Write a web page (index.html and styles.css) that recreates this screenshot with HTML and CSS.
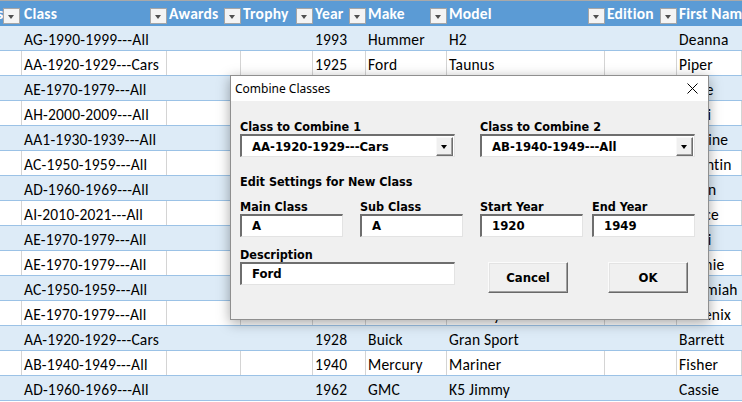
FILE: index.html
```html
<!DOCTYPE html>
<html>
<head>
<meta charset="utf-8">
<link rel="stylesheet" href="styles.css">
</head>
<body>
<div class="sheet">
  <div class="topline"></div>
  <div class="row head">
    <div class="c c0"><span>s</span><span class="fb"></span></div>
    <div class="c"><span>Class</span><span class="fb"></span></div>
    <div class="c"><span>Awards</span><span class="fb"></span></div>
    <div class="c"><span>Trophy</span><span class="fb"></span></div>
    <div class="c"><span>Year</span><span class="fb"></span></div>
    <div class="c"><span>Make</span><span class="fb"></span></div>
    <div class="c"><span>Model</span><span class="fb"></span></div>
    <div class="c"><span>Edition</span><span class="fb"></span></div>
    <div class="c"><span>First Name</span></div>
  </div>
  <div class="row b"><div class="c"></div><div class="c">AG-1990-1999---All</div><div class="c"></div><div class="c"></div><div class="c">1993</div><div class="c">Hummer</div><div class="c">H2</div><div class="c"></div><div class="c">Deanna</div></div>
  <div class="row w"><div class="c"></div><div class="c">AA-1920-1929---Cars</div><div class="c"></div><div class="c"></div><div class="c">1925</div><div class="c">Ford</div><div class="c">Taunus</div><div class="c"></div><div class="c">Piper</div></div>
  <div class="row b"><div class="c"></div><div class="c">AE-1970-1979---All</div><div class="c"></div><div class="c"></div><div class="c">1972</div><div class="c">Chevrolet</div><div class="c">Camaro</div><div class="c"></div><div class="c">Blake</div></div>
  <div class="row w"><div class="c"></div><div class="c">AH-2000-2009---All</div><div class="c"></div><div class="c"></div><div class="c">2004</div><div class="c">Pontiac</div><div class="c">GTO</div><div class="c"></div><div class="c">Fritzi</div></div>
  <div class="row b"><div class="c"></div><div class="c">AA1-1930-1939---All</div><div class="c"></div><div class="c"></div><div class="c">1934</div><div class="c">Ford</div><div class="c">Model 40</div><div class="c"></div><div class="c">Adeline</div></div>
  <div class="row w"><div class="c"></div><div class="c">AC-1950-1959---All</div><div class="c"></div><div class="c"></div><div class="c">1957</div><div class="c">Chevrolet</div><div class="c">Bel Air</div><div class="c"></div><div class="c">Quentin</div></div>
  <div class="row b"><div class="c"></div><div class="c">AD-1960-1969---All</div><div class="c"></div><div class="c"></div><div class="c">1966</div><div class="c">Ford</div><div class="c">Mustang</div><div class="c"></div><div class="c">Ethan</div></div>
  <div class="row w"><div class="c"></div><div class="c">AI-2010-2021---All</div><div class="c"></div><div class="c"></div><div class="c">2015</div><div class="c">Dodge</div><div class="c">Challenger</div><div class="c"></div><div class="c">Pierce</div></div>
  <div class="row b"><div class="c"></div><div class="c">AE-1970-1979---All</div><div class="c"></div><div class="c"></div><div class="c">1970</div><div class="c">Plymouth</div><div class="c">Barracuda</div><div class="c"></div><div class="c">Remi</div></div>
  <div class="row w"><div class="c"></div><div class="c">AE-1970-1979---All</div><div class="c"></div><div class="c"></div><div class="c">1978</div><div class="c">Pontiac</div><div class="c">Trans Am</div><div class="c"></div><div class="c">Bonnie</div></div>
  <div class="row b"><div class="c"></div><div class="c">AC-1950-1959---All</div><div class="c"></div><div class="c"></div><div class="c">1955</div><div class="c">Ford</div><div class="c">Thunderbird</div><div class="c"></div><div class="c">Jeremiah</div></div>
  <div class="row w"><div class="c"></div><div class="c">AE-1970-1979---All</div><div class="c"></div><div class="c"></div><div class="c">1976</div><div class="c">Ford</div><div class="c">Country Sedan</div><div class="c"></div><div class="c">Phoenix</div></div>
  <div class="row b"><div class="c"></div><div class="c">AA-1920-1929---Cars</div><div class="c"></div><div class="c"></div><div class="c">1928</div><div class="c">Buick</div><div class="c">Gran Sport</div><div class="c"></div><div class="c">Barrett</div></div>
  <div class="row w"><div class="c"></div><div class="c">AB-1940-1949---All</div><div class="c"></div><div class="c"></div><div class="c">1940</div><div class="c">Mercury</div><div class="c">Mariner</div><div class="c"></div><div class="c">Fisher</div></div>
  <div class="row b"><div class="c"></div><div class="c">AD-1960-1969---All</div><div class="c"></div><div class="c"></div><div class="c">1962</div><div class="c">GMC</div><div class="c">K5 Jimmy</div><div class="c"></div><div class="c">Cassie</div></div>
</div>

<div class="dlg">
  <div class="title">
    <span>Combine Classes</span>
    <svg class="close" width="11" height="11" viewBox="0 0 11 11"><path d="M0.5 0.5 L10.5 10.5 M10.5 0.5 L0.5 10.5" stroke="#000" stroke-width="1" fill="none"/></svg>
  </div>
  <div class="body">
    <div class="pair">
      <div class="fld wide">
        <div class="lbl">Class to Combine 1</div>
        <div class="box combo"><span>AA-1920-1929---Cars</span><span class="dd"></span></div>
      </div>
      <div class="fld wide">
        <div class="lbl">Class to Combine 2</div>
        <div class="box combo"><span>AB-1940-1949---All</span><span class="dd"></span></div>
      </div>
    </div>
    <div class="heading">Edit Settings for New Class</div>
    <div class="quad">
      <div class="fld"><div class="lbl">Main Class</div><div class="box">A</div></div>
      <div class="fld sp17"><div class="lbl">Sub Class</div><div class="box">A</div></div>
      <div class="fld sp17"><div class="lbl">Start Year</div><div class="box">1920</div></div>
      <div class="fld sp9"><div class="lbl">End Year</div><div class="box">1949</div></div>
    </div>
    <div class="last">
      <div class="fld wide"><div class="lbl">Description</div><div class="box">Ford</div></div>
      <div class="btn cancel">Cancel</div>
      <div class="btn ok">OK</div>
    </div>
  </div>
</div>
</body>
</html>
```
FILE: styles.css
```css
html, body {
  margin: 0;
  padding: 0;
  background: #fff;
  overflow: hidden;
}
body {
  width: 742px;
  height: 402px;
  position: relative;
  font-family: "Carlito", Lato, "Liberation Sans", sans-serif;
  font-size: 15.5px;
  letter-spacing: 0.2px;
  color: #000;
}
.sheet {
  height: 402px;
  overflow: hidden;
}
.topline {
  height: 1px;
  background: #a9a9a9;
}
.row {
  display: grid;
  grid-template-columns: 22px 145px 74px 72px 53px 81px 158px 72px 1fr;
}
.row .c {
  box-sizing: border-box;
  height: 24px;
  line-height: 20px;
  padding: 4px 0 0 2px;
  white-space: nowrap;
  overflow: hidden;
}
.row.head {
  background: #5b9bd5;
  height: 25px;
  color: #fff;
  font-weight: 700;
}
.row.head .c {
  height: 25px;
  padding: 3px 0 0 2px;
  display: flex;
  align-items: flex-start;
}
.row.head .c0 {
  padding-left: 0;
  margin-left: -3px;
}
.row.head .c0 .fb {
  margin-right: 4px;
}
.fb {
  margin-left: auto;
  margin-top: 4px;
  box-sizing: border-box;
  width: 17px;
  height: 16px;
  background: #f4f4f4;
  border: 1px solid #a6a6a6;
  position: relative;
  flex: none;
}
.fb::after {
  content: "";
  position: absolute;
  left: 4px;
  top: 6px;
  border-left: 3.5px solid transparent;
  border-right: 3.5px solid transparent;
  border-top: 4px solid #505050;
}
.row.b, .row.w {
  border-bottom: 1px solid #9bc2e6;
}
.row.b {
  background: #ddebf7;
}
.row.w .c {
  border-right: 1px solid #d4d4d4;
}
.row.b .c {
  border-right: 1px solid #ddebf7;
}
.row .c:first-child {
  padding-left: 0;
}

/* dialog */
.dlg {
  position: absolute;
  left: 230px;
  top: 75px;
  width: 479px;
  height: 245px;
  box-sizing: border-box;
  background: #f0f0f0;
  border: 1px solid #8f8f8f;
  box-shadow: 0 3px 12px rgba(0, 0, 0, 0.35);
  font-family: "DejaVu Sans Condensed", "DejaVu Sans", sans-serif;
  font-stretch: condensed;
  font-weight: 700;
  font-size: 12.5px;
  letter-spacing: 0;
  color: #000;
}
.title {
  height: 25px;
  background: #fff;
  display: flex;
  align-items: center;
  justify-content: space-between;
  padding: 0 10px 0 4px;
  font-family: "Noto Sans", "Open Sans", sans-serif;
  font-stretch: normal;
  font-weight: 400;
  font-size: 12px;
  color: #000;
}
.close {
  display: block;
}
.body {
  padding: 19px 0 0 9px;
}
.lbl, .heading {
  height: 14px;
  line-height: 14px;
  white-space: nowrap;
}
.pair {
  display: flex;
  gap: 25px;
}
.fld {
  width: 103px;
}
.fld.wide {
  width: 215px;
}
.box {
  box-sizing: border-box;
  height: 23px;
  background: #fff;
  border-style: solid;
  border-width: 2px 1px 1px 2px;
  border-color: #6e6e6e #e3e3e3 #e3e3e3 #6e6e6e;
  padding-left: 10px;
  line-height: 19px;
  font-size: 13px;
  white-space: nowrap;
}
.combo {
  display: flex;
  align-items: center;
  padding-right: 1px;
}
.dd {
  margin-left: auto;
  box-sizing: border-box;
  width: 17px;
  height: 19px;
  background: #f0f0f0;
  border-style: solid;
  border-width: 1px;
  border-color: #f8f8f8 #6e6e6e #6e6e6e #f8f8f8;
  box-shadow: inset -1px -1px 0 #a0a0a0;
  position: relative;
}
.dd::after {
  content: "";
  position: absolute;
  left: 4px;
  top: 7px;
  border-left: 3.5px solid transparent;
  border-right: 3.5px solid transparent;
  border-top: 4px solid #000;
}
.heading {
  margin-top: 18px;
}
.quad {
  display: flex;
  margin-top: 11px;
}
.sp17 {
  margin-left: 17px;
}
.sp9 {
  margin-left: 9px;
}
.last {
  display: flex;
  margin-top: 11px;
}
.btn {
  box-sizing: border-box;
  width: 80px;
  height: 31px;
  margin-top: 14px;
  background: #f0f0f0;
  border-style: solid;
  border-width: 1px;
  border-color: #fbfbfb #696969 #696969 #fbfbfb;
  box-shadow: inset -1px -1px 0 #a0a0a0, inset 1px 1px 0 #e3e3e3;
  display: flex;
  align-items: center;
  justify-content: center;
  font-size: 13px;
}
.cancel {
  margin-left: 33px;
}
.ok {
  margin-left: 40px;
}
```
